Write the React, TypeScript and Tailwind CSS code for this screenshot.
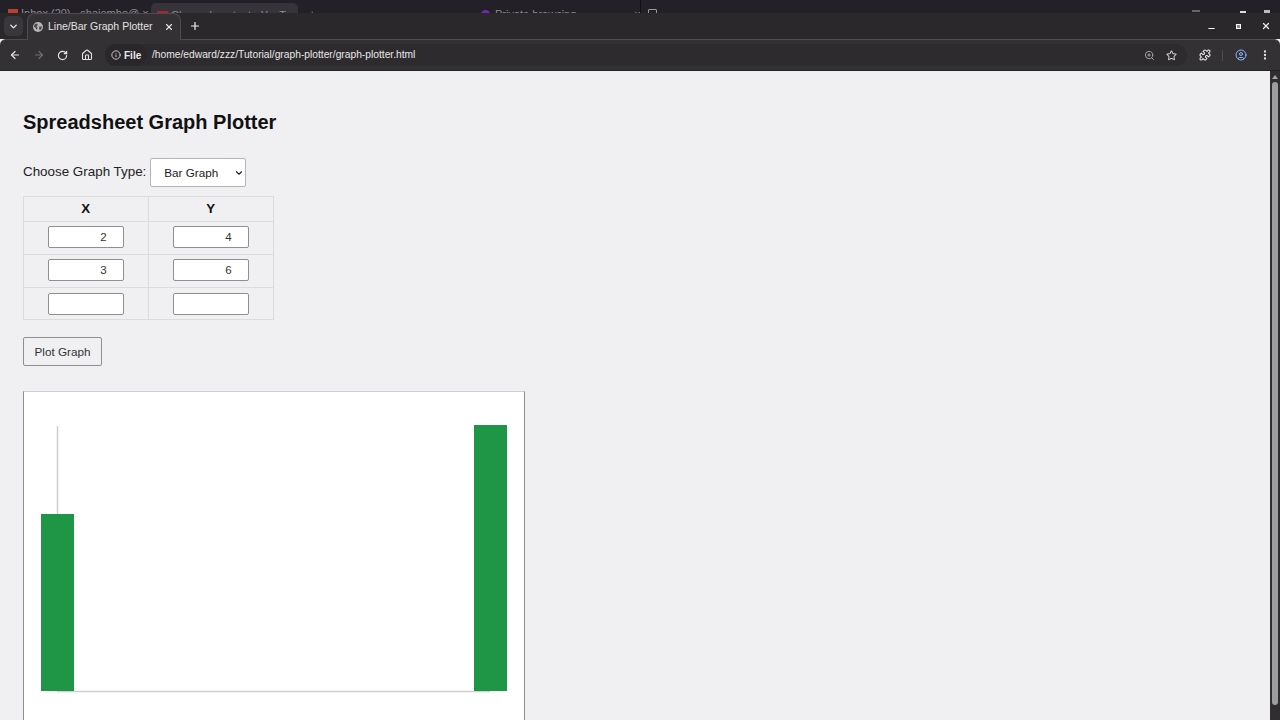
import { ArrowLeft, ArrowRight, RotateCw, Home, Info, Plus, X, ChevronDown, ZoomIn, Star, Puzzle, CircleUser, EllipsisVertical, Minus } from "lucide-react";

function Cell({ value, right, last }: { value?: string; right?: boolean; last?: boolean }) {
  return (
    <td className={`p-0 border-t border-[#dcdbde] text-center ${last ? "h-[32px]" : "h-[33px] pb-[2px]"} ${right ? "" : "border-r"}`}>
      <div className="flex justify-center">
        <div className="w-[76px] h-[22px] bg-white border border-[#8f8f92] rounded-[2px] text-[11.5px] leading-[20px] text-right pr-[16px] text-[#333]">{value}</div>
      </div>
    </td>
  );
}

export default function App() {
  return (
    <div className="w-[1280px] h-[720px] overflow-hidden flex flex-col bg-[#f0eff2] font-['Liberation_Sans',Arial,sans-serif]">
      {/* window behind */}
      <div className="h-[13px] bg-[#232127] overflow-hidden flex items-start shrink-0 text-[11px] text-[#8d8b90]">
        <div className="w-[151px] pl-[8px] pt-[7px] flex items-center gap-[3px] h-[20px] shrink-0">
          <span className="w-[10px] h-[9px] bg-[#b8412f] shrink-0" />
          <span className="whitespace-nowrap">Inbox (20) - shaiembo@ ×</span>
        </div>
        <div className="w-[147px] h-[20px] mt-[3px] bg-[#36343a] rounded-t-[5px] pl-[6px] pt-[4px] flex items-center gap-[3px] shrink-0">
          <span className="w-[11px] h-[8px] bg-[#a32630] shrink-0" />
          <span className="whitespace-nowrap">Channel content - YouT ×</span>
        </div>
        <div className="w-[183px] pl-[11px] pt-[6px] shrink-0">+</div>
        <div className="w-[159px] pt-[9px] flex items-center h-[20px] gap-[5px] shrink-0">
          <span className="w-[9px] h-[9px] rounded-full bg-[#6b2bb0] shrink-0" />
          <span className="whitespace-nowrap">Private browsing</span>
          <span className="ml-[30px] w-[6px] h-[2px] bg-[#999] shrink-0" />
          <span className="ml-[12px]">×</span>
        </div>
        <div className="w-[540px] h-[13px] border-l border-[#111] pl-[7px] pt-[9px] shrink-0">
          <span className="block w-[9px] h-[9px] border border-[#999] rounded-[1px]" />
        </div>
        <div className="flex-1 relative h-[13px]">
          <span className="absolute left-[12px] top-[10px] w-[8px] h-[2px] bg-[#666]" />
          <span className="absolute left-[60px] top-[11px] w-[6px] h-[2px] bg-[#ddd]" />
          <span className="absolute left-[84px] top-[10px] w-[6px] h-[3px] bg-[#bbb]" />
        </div>
      </div>

      {/* tab strip */}
      <div className="h-[26px] bg-[#2a282b] flex items-end shrink-0 text-white">
        <div className="ml-[4px] mb-[3px] w-[19px] h-[20px] rounded-[5px] bg-[#39373b] flex items-center justify-center">
          <ChevronDown size={11} strokeWidth={3} color="#e8e8e8" />
        </div>
        <div className="relative z-10 -mb-px ml-[4px] w-[154px] h-[27px] bg-[#333134] rounded-t-[8px] border border-b-0 border-[#4d4b4f] flex items-center pl-[5px] text-[10.5px] text-[#e2e2e2]">
          <svg width="10" height="10" viewBox="0 0 10 10" className="shrink-0">
            <circle cx="5" cy="5" r="5" fill="#b5b5b8" />
            <path d="M1.5 2.5 L4 1.5 L4.8 3 L3.6 4.4 L4.6 5.8 L3.6 7.8 L2.6 6 L1 4.5 Z M6.3 4.6 L8.8 4.4 L8.6 6.6 L6.9 8.4 L6 6.4 Z" fill="#4a484c" />
          </svg>
          <span className="ml-[5px] whitespace-nowrap">Line/Bar Graph Plotter</span>
          <X size={10} strokeWidth={2.6} className="ml-[12px]" color="#e6e6e6" />
        </div>
        <Plus size={12} strokeWidth={2.4} className="ml-[8px] mb-[7px]" color="#f0f0f0" />
        <div className="flex-1 flex items-center justify-end h-[26px] pr-[9px] gap-[16px]">
          <Minus size={9} strokeWidth={3} color="#fff" className="mt-[4px]" />
          <span className="w-[5px] h-[5px] border-[1.5px] border-white bg-[#888] mx-[4px]" />
          <X size={10} strokeWidth={3} color="#eee" />
        </div>
      </div>

      {/* toolbar */}
      <div className="h-[32px] bg-[#333134] border-t border-[#4d4b4f] border-b border-b-[#222] flex items-center shrink-0 rounded-t-[6px] text-white">
        <ArrowLeft size={12} strokeWidth={2.4} className="ml-[9px]" color="#e4e4e4" />
        <ArrowRight size={12} strokeWidth={2.2} className="ml-[12px]" color="#706e72" />
        <RotateCw size={11} strokeWidth={2.6} className="ml-[12px]" color="#e4e4e4" />
        <Home size={12} strokeWidth={2.2} className="ml-[13px]" color="#e4e4e4" />
        <div className="ml-[12px] flex-1 h-[22px] mr-[5px] bg-[#2d2b2e] rounded-full flex items-center pr-[9px]">
          <div className="h-[22px] w-[42px] pl-[6px] bg-[#29272a] rounded-full flex items-center gap-[3px] text-[10px] font-bold text-[#e8e8e8] shrink-0">
            <Info size={10} strokeWidth={2} color="#e4e4e4" className="shrink-0" />
            <span>File</span>
          </div>
          <span className="ml-[5px] text-[10.25px] text-[#e8e8e8] whitespace-nowrap">/home/edward/zzz/Tutorial/graph-plotter/graph-plotter.html</span>
          <div className="flex-1" />
          <ZoomIn size={11} strokeWidth={2} color="#a8a8aa" />
          <Star size={11} strokeWidth={2.2} color="#d0d0d0" className="ml-[11px] mr-[1px]" />
        </div>
        <Puzzle size={12} strokeWidth={2.2} color="#e8e8e8" className="ml-[7px]" />
        <div className="ml-[11px] w-px h-[11px] bg-[#4d4b4f]" />
        <CircleUser size={12} strokeWidth={2} color="#8ab4f8" className="ml-[12px]" />
        <EllipsisVertical size={12} strokeWidth={2.6} color="#e8e8e8" className="ml-[12px] mr-[9px]" />
      </div>

      {/* page + scrollbar */}
      <div className="flex-1 min-h-0 flex">
        <div className="flex-1 min-w-0 overflow-hidden pl-[23px] pt-[40px] text-[#111]">
          <h1 className="text-[20px] leading-[23px] font-bold text-[#111]">Spreadsheet Graph Plotter</h1>
          <div className="mt-[24px] flex items-center h-[29px]">
            <span className="text-[13.4px] text-[#222]">Choose Graph Type:</span>
            <div className="ml-[4px] w-[96px] h-[29px] bg-white border border-[#b4b4b6] rounded-[2px] flex items-center pl-[13px] text-[11.7px] text-[#222]">
              <span>Bar Graph</span>
              <ChevronDown size={10} strokeWidth={2.6} className="ml-[16px]" color="#222" />
            </div>
          </div>
          <table className="mt-[9px] w-[251px] border-separate border-spacing-0 border border-[#dcdbde] table-fixed">
            <thead>
              <tr>
                <th className="h-[24px] p-0 border-r border-[#dcdbde] text-[13.3px] font-bold text-[#111]">X</th>
                <th className="h-[24px] p-0 text-[13.3px] font-bold text-[#111]">Y</th>
              </tr>
            </thead>
            <tbody>
              <tr><Cell value="2" /><Cell value="4" right /></tr>
              <tr><Cell value="3" /><Cell value="6" right /></tr>
              <tr><Cell last /><Cell last right /></tr>
            </tbody>
          </table>
          <div className="mt-[17px] w-[79px] h-[29px] bg-[#f0eff2] border border-[#8f8f92] rounded-[2px] flex items-center justify-center text-[11.7px] text-[#333]">Plot Graph</div>
          <div className="mt-[25px] w-[502px] h-[402px] bg-white border border-[#8f8f92] border-t-[#cfcfd1]">
            <svg width="500" height="400" viewBox="0 0 500 400" className="block">
              <line x1="33.5" y1="34" x2="33.5" y2="299" stroke="#cfcfcf" strokeWidth="1.5" />
              <line x1="33" y1="299.5" x2="466" y2="299.5" stroke="#cfcfcf" strokeWidth="1.5" />
              <rect x="17" y="122" width="33" height="177" fill="#1f9646" />
              <rect x="450" y="33" width="33" height="266" fill="#1f9646" />
            </svg>
          </div>
        </div>
        <div className="w-[10px] bg-[#302e31] shrink-0 flex flex-col items-center pt-[4px]">
          <div className="w-0 h-0 border-x-[3.5px] border-x-transparent border-b-[4px] border-b-[#a5a5a7]" />
          <div className="mt-[3px] w-[6px] h-[623px] bg-[#9d9d9f] rounded-[3px]" />
        </div>
      </div>
    </div>
  );
}
